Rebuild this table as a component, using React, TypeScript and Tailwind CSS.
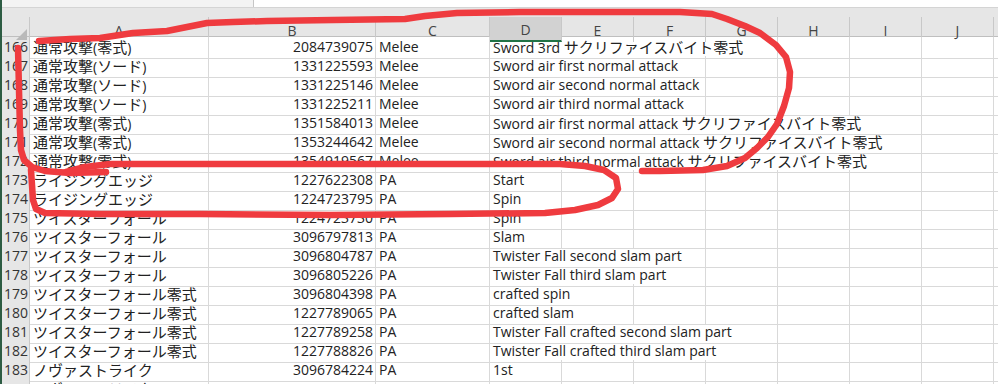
import React from 'react';

// one spreadsheet row: number, A, B, C, D text and how many columns D spills over
interface Row {
  n: number;
  a: string;
  b: string;
  c: string;
  d: string;
  span: number;
}

const rows: Row[] = [
  { n: 166, a: '通常攻撃(零式)', b: '2084739075', c: 'Melee', d: 'Sword 3rd サクリファイスバイト零式', span: 4 },
  { n: 167, a: '通常攻撃(ソード)', b: '1331225593', c: 'Melee', d: 'Sword air first normal attack', span: 3 },
  { n: 168, a: '通常攻撃(ソード)', b: '1331225146', c: 'Melee', d: 'Sword air second normal attack', span: 3 },
  { n: 169, a: '通常攻撃(ソード)', b: '1331225211', c: 'Melee', d: 'Sword air third normal attack', span: 3 },
  { n: 170, a: '通常攻撃(零式)', b: '1351584013', c: 'Melee', d: 'Sword air first normal attack サクリファイスバイト零式', span: 6 },
  { n: 171, a: '通常攻撃(零式)', b: '1353244642', c: 'Melee', d: 'Sword air second normal attack サクリファイスバイト零式', span: 6 },
  { n: 172, a: '通常攻撃(零式)', b: '1354919567', c: 'Melee', d: 'Sword air third normal attack サクリファイスバイト零式', span: 6 },
  { n: 173, a: 'ライジングエッジ', b: '1227622308', c: 'PA', d: 'Start', span: 1 },
  { n: 174, a: 'ライジングエッジ', b: '1224723795', c: 'PA', d: 'Spin', span: 1 },
  { n: 175, a: 'ツイスターフォール', b: '1224723730', c: 'PA', d: 'Spin', span: 1 },
  { n: 176, a: 'ツイスターフォール', b: '3096797813', c: 'PA', d: 'Slam', span: 1 },
  { n: 177, a: 'ツイスターフォール', b: '3096804787', c: 'PA', d: 'Twister Fall second slam part', span: 3 },
  { n: 178, a: 'ツイスターフォール', b: '3096805226', c: 'PA', d: 'Twister Fall third slam part', span: 3 },
  { n: 179, a: 'ツイスターフォール零式', b: '3096804398', c: 'PA', d: 'crafted spin', span: 2 },
  { n: 180, a: 'ツイスターフォール零式', b: '1227789065', c: 'PA', d: 'crafted slam', span: 2 },
  { n: 181, a: 'ツイスターフォール零式', b: '1227789258', c: 'PA', d: 'Twister Fall crafted second slam part', span: 4 },
  { n: 182, a: 'ツイスターフォール零式', b: '1227788826', c: 'PA', d: 'Twister Fall crafted third slam part', span: 4 },
  { n: 183, a: 'ノヴァストライク', b: '3096784224', c: 'PA', d: '1st', span: 1 },
  { n: 184, a: 'ノヴァストライク', b: '', c: '', d: '', span: 1 },
];

const spanClass: Record<number, string> = {
  1: 'col-span-1',
  2: 'col-span-2',
  3: 'col-span-3',
  4: 'col-span-4',
  5: 'col-span-5',
  6: 'col-span-6',
};

const gridCols = 'grid grid-cols-[28px_179px_167px_114px_72px_72px_72px_72px_72px_72px_72px_1fr]';
const cell = 'border-r border-b border-[#d9d9d9] whitespace-nowrap overflow-visible leading-[20px]';

// Japanese runs are set a bit larger than the latin text, like the Excel font does
function Txt({ s }: { s: string }) {
  const parts = s.split(/([\u3000-\u30ff\u4e00-\u9fff\uff00-\uffef]+)/);
  return (
    <>
      {parts.map((p, i) =>
        /[\u3000-\u30ff\u4e00-\u9fff\uff00-\uffef]/.test(p) ? (
          <span key={i} className="text-[15px]">{p}</span>
        ) : (
          <span key={i}>{p}</span>
        )
      )}
    </>
  );
}

function HeaderRow() {
  const letters = ['A', 'B', 'C', 'D', 'E', 'F', 'G', 'H', 'I', 'J'];
  return (
    <div className={`${gridCols} h-[20px] bg-[#e6e6e6] border-b border-[#bfbfbf]`}>
      <div className="relative border-r border-[#c8c8c8]">
        <svg className="absolute right-[2px] bottom-[2px]" width="11" height="11" viewBox="0 0 11 11">
          <polygon points="11,0 11,11 0,11" fill="#b9b9b9" />
        </svg>
      </div>
      {letters.map((l) => (
        <div
          key={l}
          className={`flex items-center justify-center pt-[2px] text-[14px] text-[#444] border-r border-[#c8c8c8] ${
            l === 'D' ? 'bg-[#d2d2d2] border-b-2 border-b-[#217346]' : ''
          }`}
        >
          {l}
        </div>
      ))}
      <div />
    </div>
  );
}

function DataRow({ r }: { r: Row }) {
  const rest = 7 - r.span;
  return (
    <div className={`${gridCols} h-[19px]`}>
      <div className="bg-[#e6e6e6] border-r border-b border-[#c8c8c8] text-[14px] leading-[20px] pl-[2px] text-[#333]">
        {r.n}
      </div>
      <div className={`${cell} pl-[3px] text-[#222]`}>
        <Txt s={r.a} />
      </div>
      <div className={`${cell} pr-[2px] text-right text-[#222]`}>{r.b}</div>
      <div className={`${cell} pl-[3px] text-[#222]`}>{r.c}</div>
      <div className={`${cell} ${spanClass[r.span]} pl-[3px] text-[#222]`}>
        <Txt s={r.d} />
      </div>
      {Array.from({ length: rest }).map((_, i) => (
        <div key={i} className={cell} />
      ))}
      <div className="border-b border-[#d9d9d9]" />
    </div>
  );
}

export default function App() {
  return (
    <div
      className="relative w-[998px] h-[384px] overflow-hidden bg-white border-l-2 border-[#2d5c43] text-[14px]"
      style={{ fontFamily: "'Open Sans', 'Noto Sans CJK JP', sans-serif" }}
    >
      {/* formula bar strip */}
      <div className="flex h-[8px] bg-[#f3f3f3] border-b border-[#d4d4d4]">
        <div className="w-[251px]" />
        <div className="flex-1 bg-white border-l border-[#c6c6c6]" />
      </div>
      <div className="h-[9px] bg-[#e6e6e6]" />
      <HeaderRow />
      {rows.map((r) => (
        <DataRow key={r.n} r={r} />
      ))}

      {/* red pen annotations drawn over the sheet */}
      <svg className="absolute -left-[2px] top-0 pointer-events-none" width="998" height="384" viewBox="0 0 998 384">
        <g fill="none" stroke="#ef3b3f" strokeWidth="6.5" strokeLinecap="round" strokeLinejoin="round">
          <path d="M39 41 L70 39 L100 38 L133 33 L167 31 L187 27 L207 23 L233 22 L267 21 L333 20 L405 19 L425 16 L457 13 L520 12 L600 12 L680 12 L712 14 L727 19 L745 26 L760 33 L776 45 L786 57 L790 72 L789 88 L784 106 L777 124 L768 137 L757 148 L745 158 L727 166 L703 170 L660 171 L642 171" />
          <path d="M18 48 L19 90 L20 130 L21 150 L24 160 L32 167 L45 171 L70 173 L106 172" />
          <path d="M66 172 L85 167 L110 164 L200 164 L330 164 L450 164 L560 164 L585 166 L604 170 L616 178 L618 189 L612 198 L598 205 L575 210 L545 213 L450 214 L330 215 L200 214 L100 214 L45 213 L36 209 L33 200 L32 185 L31 170" />
        </g>
      </svg>
    </div>
  );
}
